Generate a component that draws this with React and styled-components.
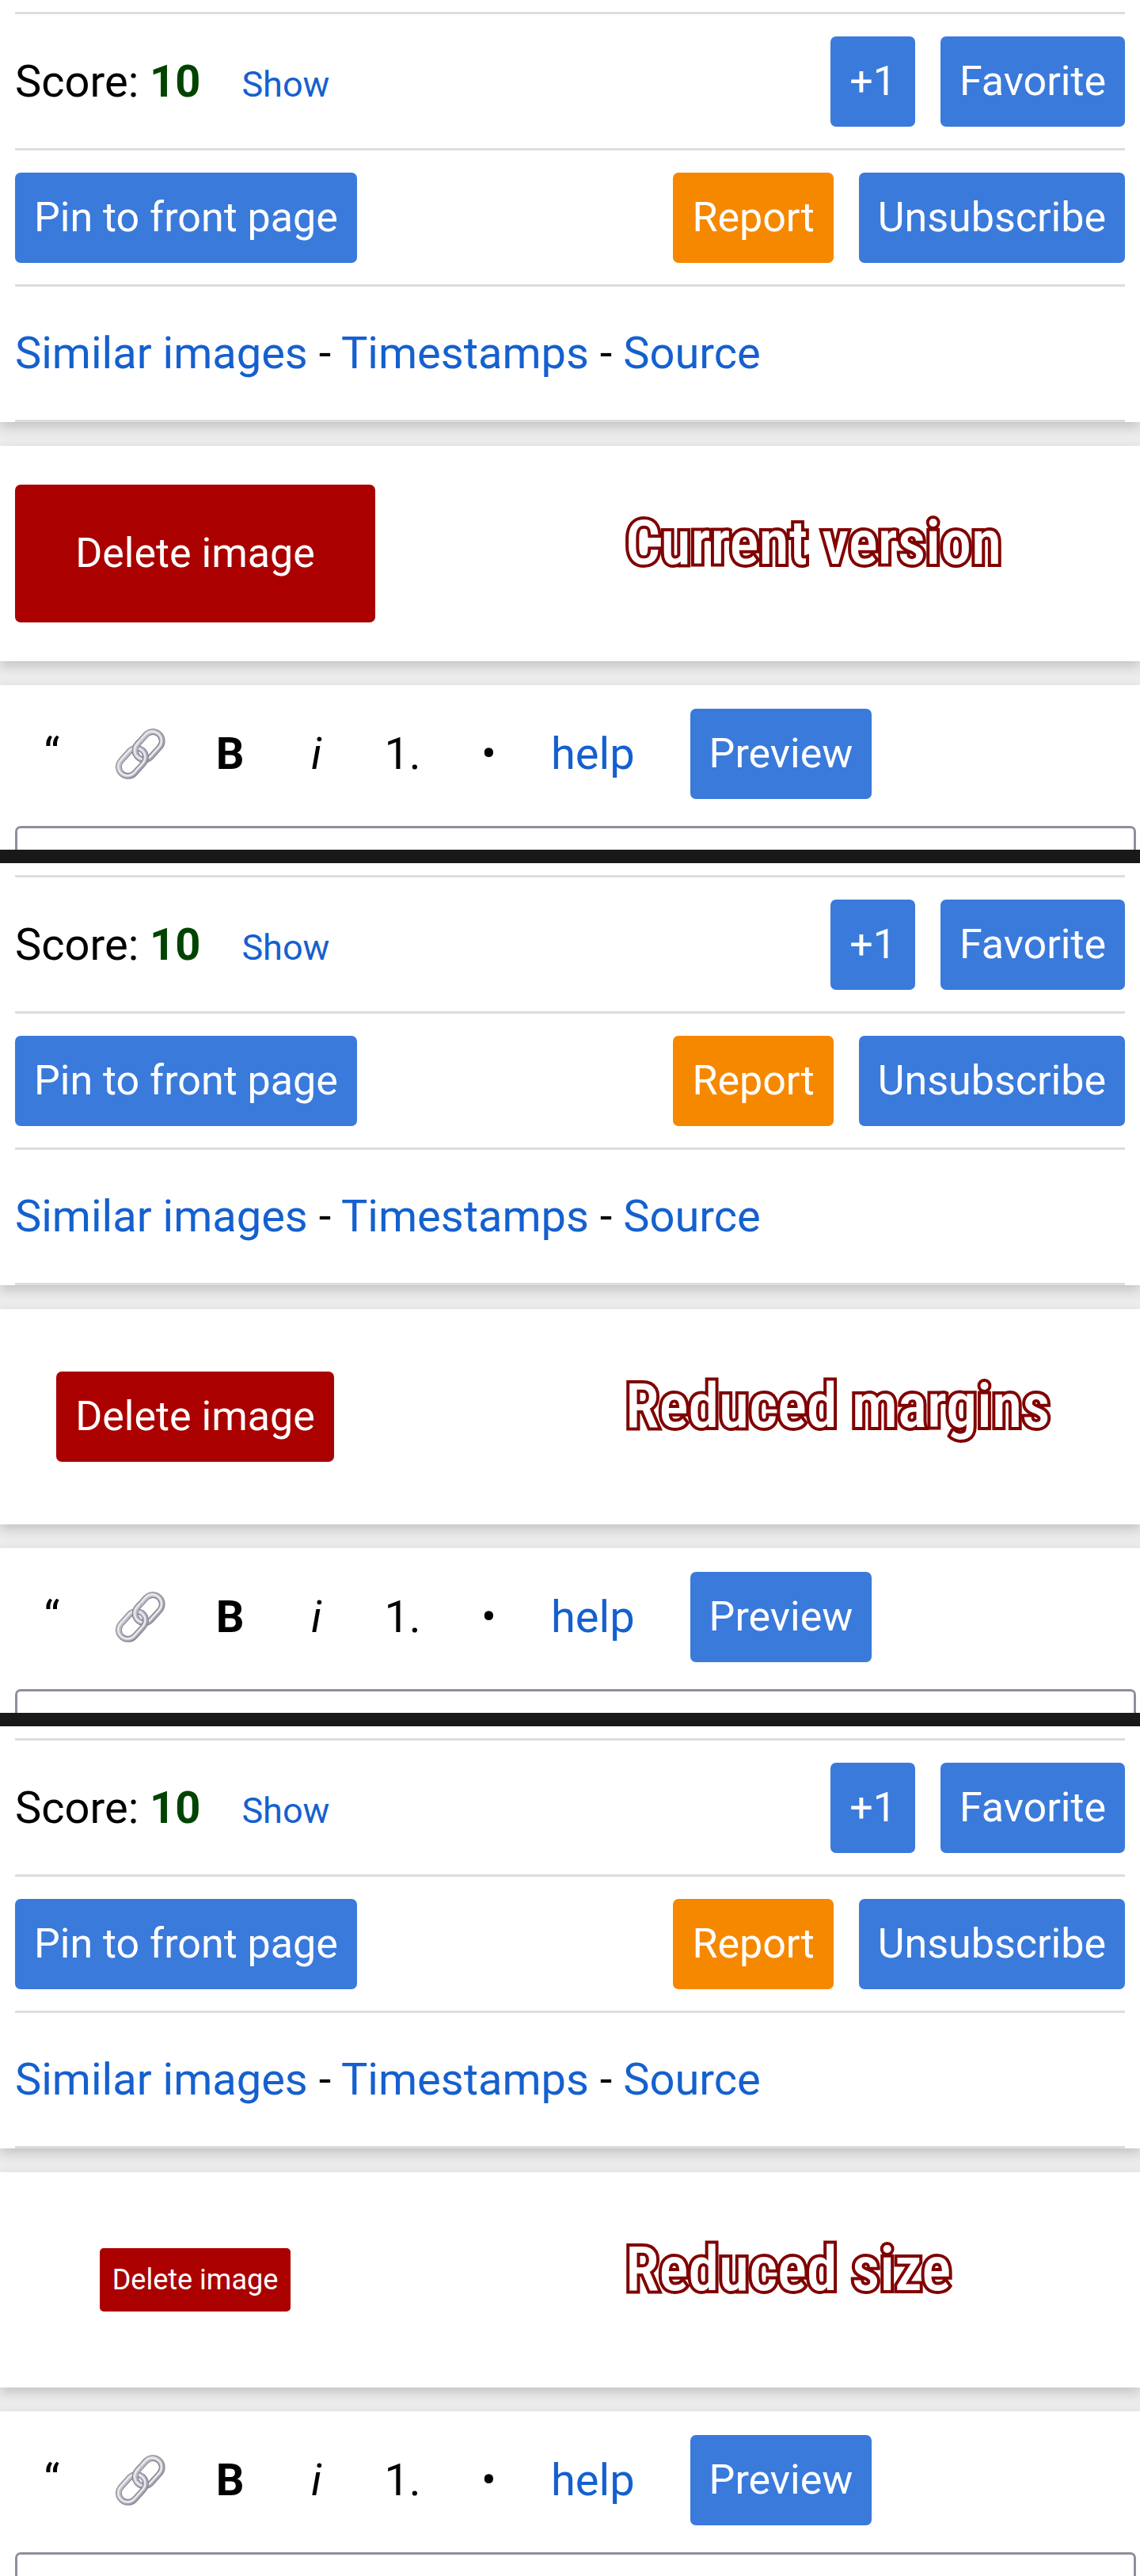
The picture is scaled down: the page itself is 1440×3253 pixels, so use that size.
import React from 'react';
import styled, { createGlobalStyle, css } from 'styled-components';

const GlobalStyle = createGlobalStyle`
  body {
    margin: 0;
    background: #ececec;
    color: #000;
    font-family: Roboto, "Liberation Sans", sans-serif;
    font-size: 56px;
    line-height: 66px;
  }
`

const Panel = styled.article`
  & + & {
    border-top: 17px solid #191919;
  }
`

const Block = styled.section`
  background: #fff;
  box-shadow: 0 6px 14px rgba(0, 0, 0, 0.18);
  margin-bottom: 30px;
  padding: ${p => p.$top || '0'} 19px 0;
`

const Row = styled.div`
  display: flex;
  align-items: center;
  justify-content: space-between;
  height: 169px;
  border-top: 3px solid #ddd;

  &:last-child {
    height: 168px;
    border-bottom: 3px solid #ddd;
  }
`

const Group = styled.div`
  display: flex;
  align-items: baseline;
  gap: ${p => p.$gap || '0'};
`

const Score = styled.b`
  color: #040;
`

const Link = styled.a`
  color: #1560cf;
  font-size: ${p => (p.$small ? '45px' : 'inherit')};
  line-height: ${p => (p.$small ? '50px' : 'inherit')};
  text-decoration: none;
`

const colors = {
  primary: '#3a7adb',
  warning: '#f68800',
  danger: '#a00',
}

const sizes = {
  normal: css`
    font-size: 52px;
    line-height: 62px;
    padding: 26px 24px;
  `,
  large: css`
    font-size: 52px;
    line-height: 62px;
    padding: 56px 76px;
  `,
  small: css`
    font-size: 36px;
    line-height: 42px;
    padding: 19px 16px;
    border-radius: 5px;
  `,
}

const Button = styled.button`
  border: 0;
  border-radius: 7px;
  background: ${p => colors[p.$color || 'primary']};
  color: #fff;
  font-family: inherit;
  white-space: nowrap;
  cursor: pointer;
  ${p => sizes[p.$size || 'normal']}
`

const DeleteRow = styled.div`
  display: grid;
  grid-template-columns: 55% 1fr;
  align-items: center;
  min-height: 272px;
`

const DeleteBox = styled.div`
  display: flex;
  justify-content: center;
  width: 455px;
`

const Caption = styled.h2`
  margin: 0;
  padding-bottom: 26px;
  color: #fff;
  font-family: "Roboto Condensed", "Liberation Sans Narrow", Roboto, sans-serif;
  font-size: 78px;
  font-weight: 500;
  line-height: 100px;
  white-space: nowrap;
  -webkit-text-stroke: 8px #800000;
  paint-order: stroke fill;
  stroke-linejoin: round;
`

const Editor = styled.section`
  background: #fff;
  box-shadow: 0 6px 14px rgba(0, 0, 0, 0.18);
  padding: 30px 5px 0 19px;
`

const Toolbar = styled.div`
  display: flex;
  align-items: center;
  gap: 16px;
  margin-bottom: 34px;
`

const Tool = styled.button`
  min-width: 93px;
  padding: 0 16px;
  border: 0;
  background: none;
  color: #000;
  font: inherit;
  font-weight: ${p => (p.$bold ? 700 : 400)};
  font-style: ${p => (p.$italic ? 'italic' : 'normal')};
  cursor: pointer;

  svg {
    display: block;
    margin: 0 auto;
  }
`

const HelpLink = styled(Link)`
  padding: 0 54px 0 16px;
`

const Comment = styled.textarea`
  display: block;
  box-sizing: border-box;
  width: 100%;
  height: 30px;
  border: 3px solid #8f8f9d;
  border-bottom: 0;
  border-radius: 7px 7px 0 0;
  background: #fff;
  font: inherit;
  resize: none;
  overflow: hidden;
`

function Ring({ x, y }) {
  const shape = {
    x: x - 59,
    y: y - 35,
    width: 118,
    height: 70,
    rx: 35,
    fill: 'none',
    transform: `rotate(-48 ${x} ${y})`,
  }
  return (
    <g>
      <rect {...shape} stroke="#747582" strokeWidth="23" />
      <rect {...shape} stroke="url(#metal)" strokeWidth="18" />
      <g transform="translate(-2 -1)">
        <rect {...shape} stroke="#d3d3dc" strokeWidth="9" />
        <rect {...shape} stroke="#f0f0f4" strokeWidth="4" />
      </g>
    </g>
  )
}

function ChainIcon() {
  return (
    <svg width="68" height="66" viewBox="46 54 204 198" aria-hidden="true">
      <linearGradient id="metal" x1="0" y1="0" x2="0" y2="1">
        <stop offset="0" stopColor="#bcbdc6" />
        <stop offset="1" stopColor="#a3a2b0" />
      </linearGradient>
      <clipPath id="overlap">
        <rect x="100" y="95" width="46" height="60" />
      </clipPath>
      <Ring x={177} y={122} />
      <Ring x={115} y={184} />
      <g clipPath="url(#overlap)">
        <Ring x={177} y={122} />
      </g>
    </svg>
  )
}

function ImagePanel({ caption, size }) {
  return (
    <Panel>
      <Block $top="15px">
        <Row>
          <Group $gap="52px">
            <span>Score: <Score>10</Score></span>
            <Link href="#votes" $small>Show</Link>
          </Group>
          <Group $gap="32px">
            <Button>+1</Button>
            <Button>Favorite</Button>
          </Group>
        </Row>
        <Row>
          <Button>Pin to front page</Button>
          <Group $gap="32px">
            <Button $color="warning">Report</Button>
            <Button>Unsubscribe</Button>
          </Group>
        </Row>
        <Row>
          <span>
            <Link href="#similar">Similar images</Link> - <Link href="#timestamps">Timestamps</Link> - <Link href="#source">Source</Link>
          </span>
        </Row>
      </Block>

      <Block>
        <DeleteRow>
          <DeleteBox>
            <Button $color="danger" $size={size}>Delete image</Button>
          </DeleteBox>
          <Caption>{caption}</Caption>
        </DeleteRow>
      </Block>

      <Editor>
        <Toolbar>
          <Tool aria-label="Quote">“</Tool>
          <Tool aria-label="Insert link"><ChainIcon /></Tool>
          <Tool aria-label="Bold" $bold>B</Tool>
          <Tool aria-label="Italic" $italic>i</Tool>
          <Tool aria-label="Numbered list">1.</Tool>
          <Tool aria-label="Bullet list">•</Tool>
          <HelpLink href="#help">help</HelpLink>
          <Button>Preview</Button>
        </Toolbar>
        <Comment aria-label="Comment" />
      </Editor>
    </Panel>
  )
}

const versions = [
  { caption: 'Current version', size: 'large' },
  { caption: 'Reduced margins', size: 'normal' },
  { caption: 'Reduced size', size: 'small' },
]

export default function App() {
  return (
    <>
      <GlobalStyle />
      {versions.map(v => <ImagePanel key={v.caption} {...v} />)}
    </>
  )
}
